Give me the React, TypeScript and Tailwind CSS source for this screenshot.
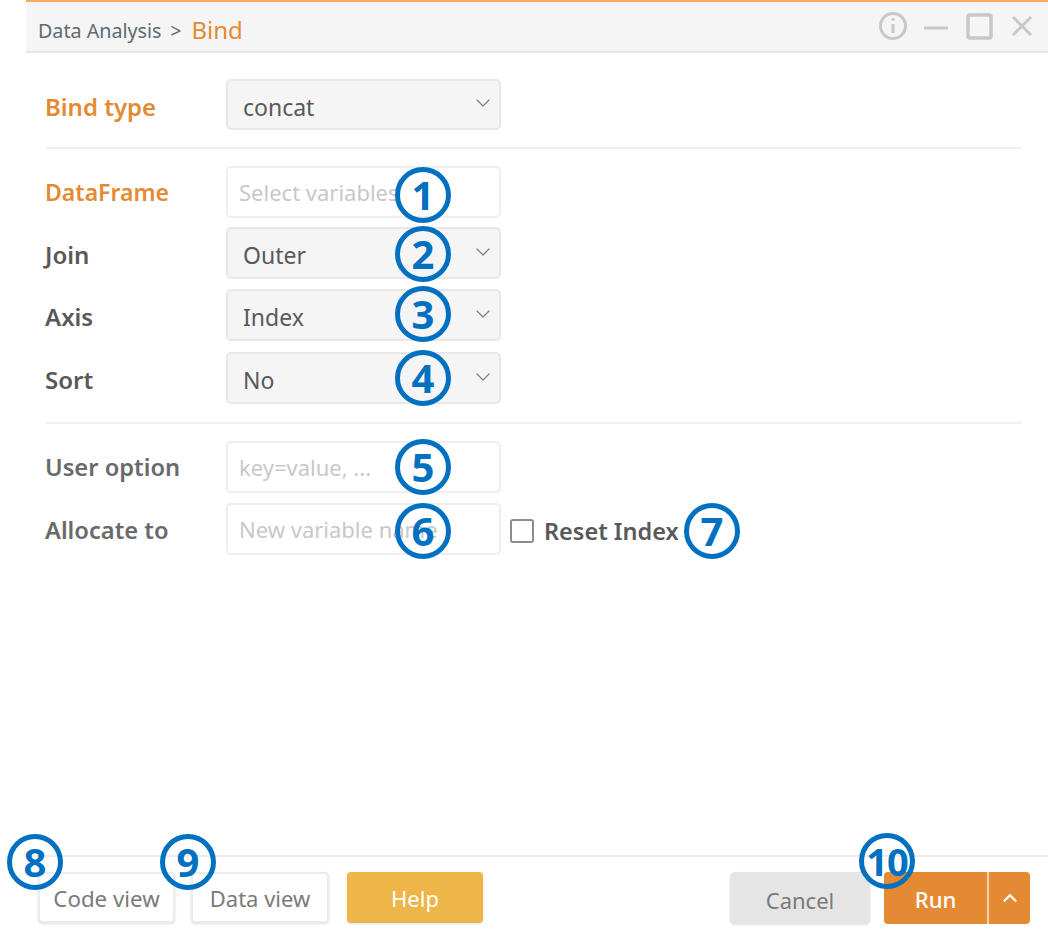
import { ChevronDown, ChevronUp } from 'lucide-react';

const font = 'font-["Noto_Sans","Open_Sans",sans-serif]';

const selectBadgeOffsets: Record<number, string> = {
  2: 'left-[167px] top-[-3px]',
  3: 'left-[167px] top-[-5px]',
  4: 'left-[167px] top-[-4px]',
};

function Badge({ n, className }: { n: number; className: string }) {
  return (
    <span className={`absolute flex h-[56px] w-[56px] items-center justify-center rounded-full border-[5px] border-[#0070c0] text-[#0070c0] font-bold leading-none ${n === 10 ? 'text-[38px] tracking-[-1px]' : 'text-[40px]'} ${className}`}>
      {n}
    </span>
  );
}

function Label({ text, accent, muted, className = 'text-[24px]' }: { text: string; accent?: boolean; muted?: boolean; className?: string }) {
  return (
    <div className={`w-[181px] shrink-0 font-semibold ${className} ${accent ? 'text-[#e48a33]' : muted ? 'text-[#6a6a6a]' : 'text-[#595959]'}`}>
      {text}
    </div>
  );
}

function SelectBox({ value, badge, height = 'h-[52px]' }: { value: string; badge?: number; height?: string }) {
  return (
    <div className={`relative flex w-[275px] items-center justify-between rounded-[5px] border-2 border-[#e8e8e8] bg-[#f5f5f5] pl-[15px] pr-[4px] text-[23px] text-[#595959] ${height}`}>
      <span className="pt-[5px]">{value}</span>
      <ChevronDown size={24} strokeWidth={1.2} className="mb-[3px] text-[#7f7f7f]" />
      {badge && <Badge n={badge} className={selectBadgeOffsets[badge]} />}
    </div>
  );
}

function InputBox({ placeholder, badge, badgeClass }: { placeholder: string; badge: number; badgeClass: string }) {
  return (
    <div className="relative flex h-[52px] w-[275px] items-center rounded-[5px] border-2 border-[#eeeeee] bg-white pl-[11px] text-[22px] text-[#c8c8c8] whitespace-nowrap">
      {placeholder}
      <Badge n={badge} className={badgeClass} />
    </div>
  );
}

export default function App() {
  return (
    <div className={`relative flex h-[937px] w-[1048px] flex-col overflow-hidden bg-white pl-[26px] ${font}`}>
      <div className="flex h-[53px] shrink-0 items-center justify-between border-t-2 border-b-2 border-t-[#f4a95c] border-b-[#e8e8e8] bg-[#f5f5f5] pl-[12px] pr-[13px]">
        <div className="flex items-center pt-[9px]">
          <span className="text-[19.7px] text-[#5f6b75]">Data Analysis</span>
          <span className="ml-[9px] text-[19px] text-[#5f6b75]">&gt;</span>
          <span className="ml-[10px] mb-[2px] text-[24px] text-[#e48a33]">Bind</span>
        </div>
        <svg width="156" height="32" viewBox="0 0 156 32" fill="none" stroke="#c8c8c8" strokeWidth="3" className="mb-[2px]">
          <circle cx="14" cy="16" r="12.5" />
          <path d="M14 14v9" strokeWidth="3" />
          <circle cx="14" cy="9.5" r="1.6" fill="#c8c8c8" stroke="none" />
          <path d="M45 18h24" />
          <rect x="89" y="5" width="23" height="23" rx="2" strokeWidth="3.5" />
          <path d="M134 7l18 18M152 7l-18 18" />
        </svg>
      </div>

      <div className="flex flex-1 flex-col pl-[19px] pr-[26px] pt-[26px]">
        <div className="flex items-center">
          <Label text="Bind type" accent className="pt-[5px] text-[24px]" />
          <SelectBox value="concat" height="h-[51px]" />
        </div>
        <div className="mb-[17px] mt-[17px] border-t-2 border-[#f0f0f0]" />
        <div className="flex items-center">
          <Label text="DataFrame" accent className="pt-[1px] text-[23px]" />
          <InputBox placeholder="Select variables" badge={1} badgeClass="left-[167px] top-[-1px]" />
        </div>
        <div className="mt-[9px] flex items-center">
          <Label text="Join" className="pt-[4px] text-[24px]" />
          <SelectBox value="Outer" badge={2} />
        </div>
        <div className="mt-[10px] flex items-center">
          <Label text="Axis" className="pt-[4px] text-[24px]" />
          <SelectBox value="Index" badge={3} />
        </div>
        <div className="mt-[11px] flex items-center">
          <Label text="Sort" className="pt-[4px] text-[24px]" />
          <SelectBox value="No" badge={4} />
        </div>
        <div className="mb-[17px] mt-[18px] border-t-2 border-[#f0f0f0]" />
        <div className="flex items-center">
          <Label text="User option" muted className="pt-[2px] text-[23.7px]" />
          <InputBox placeholder="key=value, ..." badge={5} badgeClass="left-[167px] top-[-4px]" />
        </div>
        <div className="mt-[10px] flex items-center">
          <Label text="Allocate to" muted className="pt-[3px] text-[23.7px]" />
          <InputBox placeholder="New variable name" badge={6} badgeClass="left-[167px] top-[-2px]" />
          <div className="relative ml-[9px] mt-[4px] flex items-center">
            <span className="h-[24px] w-[24px] rounded-[3px] border-2 border-[#8c8c8c] bg-white" />
            <span className="ml-[10px] pt-[2px] text-[23.5px] font-semibold text-[#595959]">Reset Index</span>
            <Badge n={7} className="left-[174px] top-[-9px]" />
          </div>
        </div>
      </div>

      <div className="flex h-[82px] shrink-0 items-start justify-between border-t-2 border-[#ececec] pl-[12px] pr-[18px] pt-[15px]">
        <div className="flex gap-[16px]">
          <button className="relative h-[51px] w-[137px] rounded-[4px] border-2 border-[#ececec] bg-white pt-[2px] text-[22.3px] text-[#7a7a7a] shadow-sm">
            Code view
            <Badge n={8} className="left-[-33px] top-[-40px]" />
          </button>
          <button className="relative h-[51px] w-[138px] rounded-[4px] border-2 border-[#ececec] bg-white pt-[2px] text-[22px] text-[#7a7a7a] shadow-sm">
            Data view
            <Badge n={9} className="left-[-33px] top-[-40px]" />
          </button>
          <button className="ml-[2px] h-[51px] w-[136px] rounded-[4px] bg-[#eeb548] pt-[2px] text-[22px] text-white shadow-sm">Help</button>
        </div>
        <div className="flex gap-[14px]">
          <button className="h-[52px] w-[140px] rounded-[5px] bg-[#e5e5e5] pt-[4px] text-[22px] text-[#7a7a7a] shadow-sm">Cancel</button>
          <div className="relative flex h-[52px] w-[146px] overflow-hidden rounded-[4px] bg-[#e48a33] text-white">
            <span className="flex w-[103px] items-center justify-center pt-[2px] text-[22px] font-medium">Run</span>
            <span className="flex flex-1 items-center justify-center border-l-2 border-[#f3d3b0]">
              <ChevronUp size={22} strokeWidth={2.5} />
            </span>
          </div>
          <Badge n={10} className="left-[859px] top-[833px]" />
        </div>
      </div>
    </div>
  );
}
